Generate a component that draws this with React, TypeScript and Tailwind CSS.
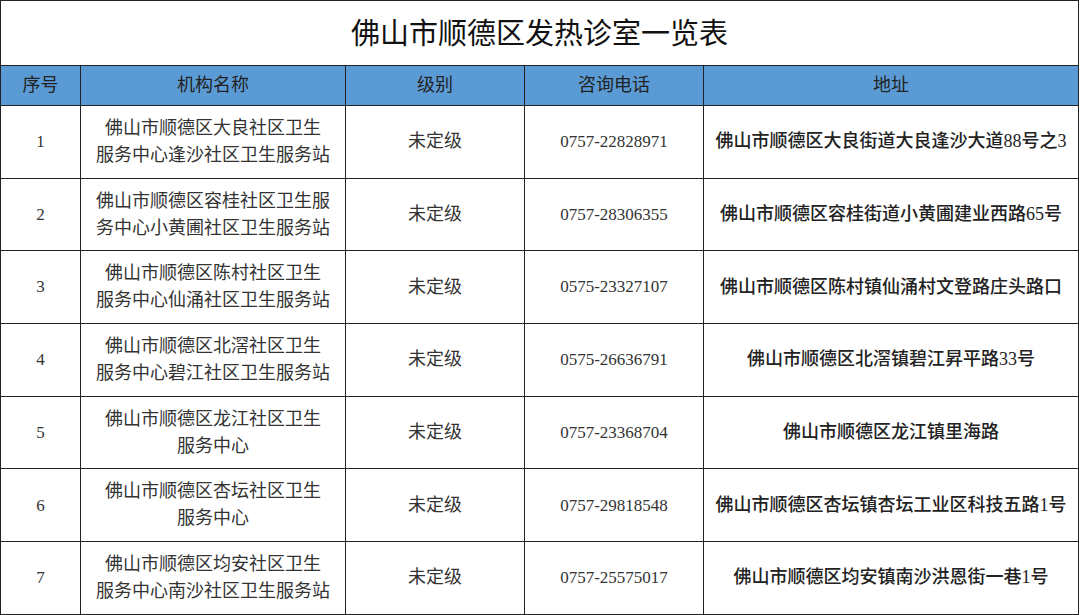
const rows = [
  { no: "1", name: ["佛山市顺德区大良社区卫生", "服务中心逢沙社区卫生服务站"], phone: "0757-22828971", addr: "佛山市顺德区大良街道大良逢沙大道88号之3" },
  { no: "2", name: ["佛山市顺德区容桂社区卫生服", "务中心小黄圃社区卫生服务站"], phone: "0757-28306355", addr: "佛山市顺德区容桂街道小黄圃建业西路65号" },
  { no: "3", name: ["佛山市顺德区陈村社区卫生", "服务中心仙涌社区卫生服务站"], phone: "0575-23327107", addr: "佛山市顺德区陈村镇仙涌村文登路庄头路口" },
  { no: "4", name: ["佛山市顺德区北滘社区卫生", "服务中心碧江社区卫生服务站"], phone: "0575-26636791", addr: "佛山市顺德区北滘镇碧江昇平路33号" },
  { no: "5", name: ["佛山市顺德区龙江社区卫生", "服务中心"], phone: "0757-23368704", addr: "佛山市顺德区龙江镇里海路" },
  { no: "6", name: ["佛山市顺德区杏坛社区卫生", "服务中心"], phone: "0757-29818548", addr: "佛山市顺德区杏坛镇杏坛工业区科技五路1号" },
  { no: "7", name: ["佛山市顺德区均安社区卫生", "服务中心南沙社区卫生服务站"], phone: "0757-25575017", addr: "佛山市顺德区均安镇南沙洪恩街一巷1号" },
]

const cell = "border border-[#222] text-center align-middle p-0"

export default function App() {
  return (
    <div className="w-[1080px] h-[615px] bg-white overflow-hidden" style={{ fontFamily: '"Liberation Serif", "Noto Sans CJK SC", serif' }}>
      <table className="w-[1079px] border-collapse table-fixed">
        <colgroup>
          <col className="w-[80px]" />
          <col className="w-[265px]" />
          <col className="w-[179px]" />
          <col className="w-[179px]" />
          <col />
        </colgroup>
        <thead>
          <tr className="h-[65px]">
            <th colSpan={5} className={`${cell} text-[29px] font-normal text-[#111] pt-[4px]`}>佛山市顺德区发热诊室一览表</th>
          </tr>
          <tr className="h-[40px] bg-[#5b9bd5] text-[18px] text-[#222]">
            <th className={`${cell} font-normal`}>序号</th>
            <th className={`${cell} font-normal`}>机构名称</th>
            <th className={`${cell} font-normal`}>级别</th>
            <th className={`${cell} font-normal`}>咨询电话</th>
            <th className={`${cell} font-normal`}>地址</th>
          </tr>
        </thead>
        <tbody>
          {rows.map((r) => (
            <tr key={r.no} className="h-[72.7px]">
              <td className={`${cell} text-[17px] text-[#333]`}>{r.no}</td>
              <td className={`${cell} text-[18px] leading-[27px] text-[#333]`}>
                {r.name.map((l) => (
                  <div key={l}>{l}</div>
                ))}
              </td>
              <td className={`${cell} text-[18px] text-[#333]`}>未定级</td>
              <td className={`${cell} text-[17px] text-[#333]`}>{r.phone}</td>
              <td className={`${cell} text-[18px] font-medium text-[#222]`}>{r.addr}</td>
            </tr>
          ))}
        </tbody>
      </table>
    </div>
  )
}
